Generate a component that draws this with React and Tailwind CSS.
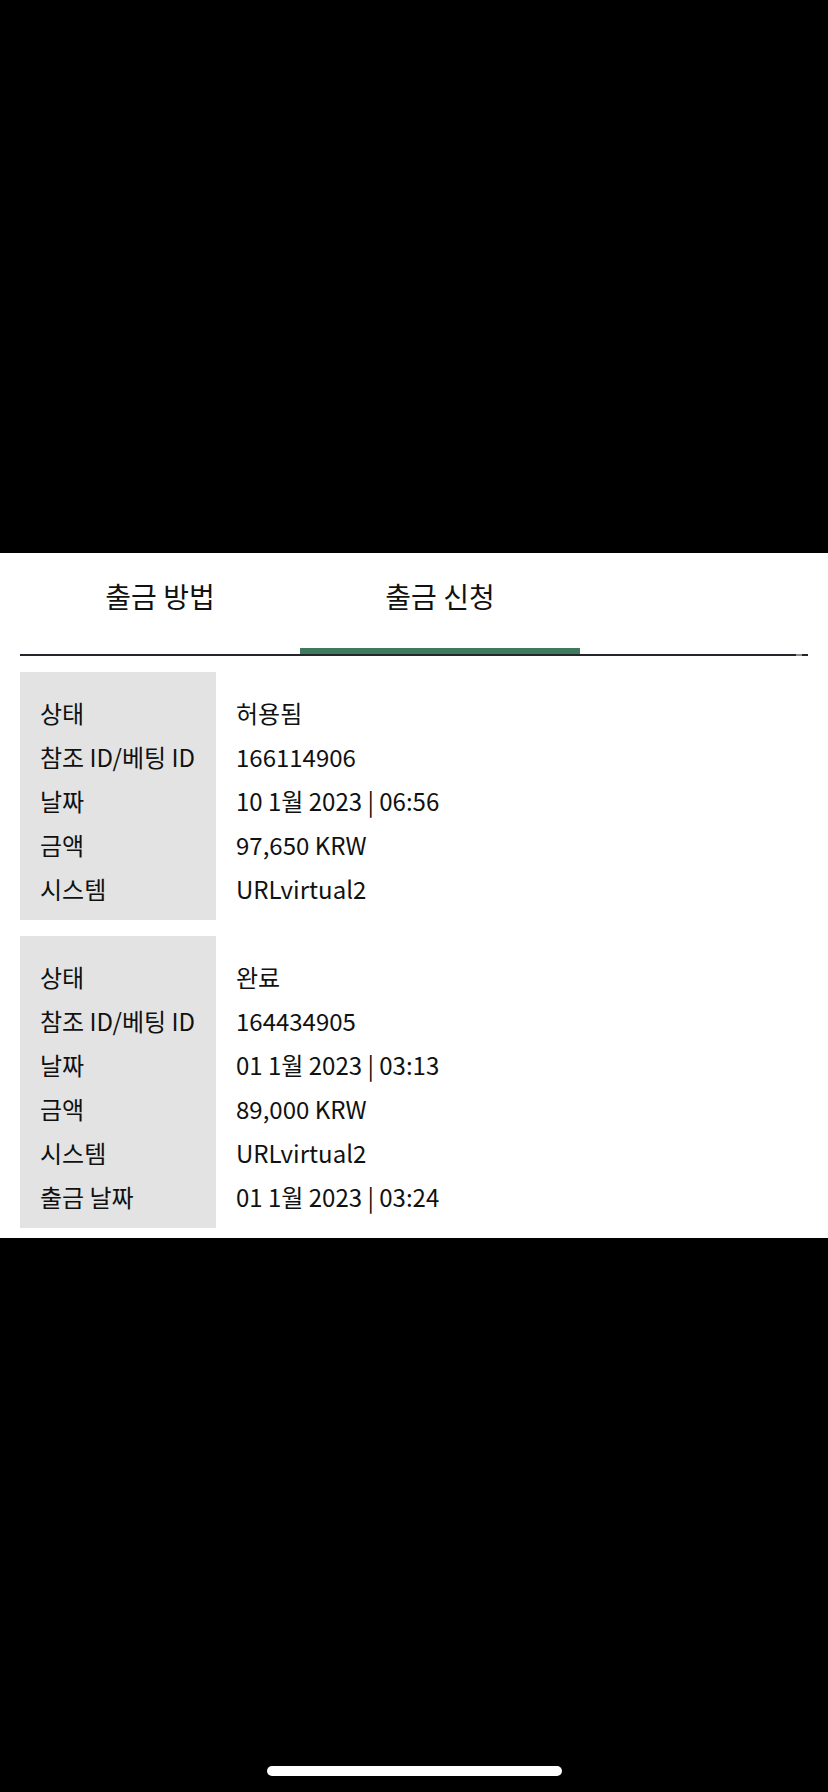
import React from "react";

// 출금 신청 내역 (모바일 화면)
const FONT = { fontFamily: '"Noto Sans CJK KR", "Noto Sans", sans-serif' };

const REQUESTS = [
  [
    ["상태", "허용됨"],
    ["참조 ID/베팅 ID", "166114906"],
    ["날짜", "10 1월 2023 | 06:56"],
    ["금액", "97,650 KRW"],
    ["시스템", "URLvirtual2"]
  ],
  [
    ["상태", "완료"],
    ["참조 ID/베팅 ID", "164434905"],
    ["날짜", "01 1월 2023 | 03:13"],
    ["금액", "89,000 KRW"],
    ["시스템", "URLvirtual2"],
    ["출금 날짜", "01 1월 2023 | 03:24"]
  ]
];

function Tab({ label, active }) {
  return (
    <div className="w-[280px] flex flex-col">
      <div className="h-[95px] pb-[9px] flex items-center justify-center text-[28px] text-[#111]">
        {label}
      </div>
      <div className={active ? "h-[6px] bg-[#3e7a5e]" : "h-[6px]"} />
    </div>
  );
}

function RequestCard({ rows }) {
  return (
    <div className="flex text-[24px] text-[#111]">
      <div className="w-[196px] bg-[#e3e3e3] pl-[20px] pt-[19px] pb-[9px]">
        {rows.map(([label]) => (
          <div key={label} className="h-[44px] leading-[44px] whitespace-nowrap">
            {label}
          </div>
        ))}
      </div>
      <div className="flex-1 pl-[20px] pt-[19px] pb-[9px]">
        {rows.map(([label, value]) => (
          <div key={label} className="h-[44px] leading-[44px] whitespace-nowrap">
            {value}
          </div>
        ))}
      </div>
    </div>
  );
}

export default function App() {
  return (
    <div className="w-[828px] h-[1792px] bg-black flex flex-col" style={FONT}>
      <div className="h-[553px]" />
      <div className="bg-white px-[20px] pb-[10px]">
        <div className="flex">
          <Tab label="출금 방법" />
          <Tab label="출금 신청" active />
        </div>
        <div className="flex h-[2px]">
          <div className="flex-1 bg-[#23262b]" />
          <div className="w-[6px] bg-[#8e8e8e]" />
          <div className="w-[6px] bg-[#23262b]" />
        </div>
        <div className="flex flex-col gap-[16px] mt-[16px]">
          {REQUESTS.map((rows, i) => (
            <RequestCard key={i} rows={rows} />
          ))}
        </div>
      </div>
      <div className="flex-1 flex flex-col justify-end items-center pb-[16px]">
        <div className="w-[295px] h-[10px] rounded-full bg-white" />
      </div>
    </div>
  );
}
